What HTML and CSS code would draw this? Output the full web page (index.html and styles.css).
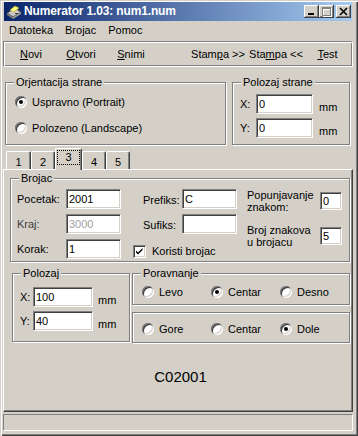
FILE: index.html
```html
<!DOCTYPE html>
<html lang="sr">
<head>
    <meta charset="UTF-8">
    <meta name="viewport" content="width=device-width, initial-scale=1.0">
    <title>Numerator 1.03: num1.num</title>

    <link rel="stylesheet" href="styles.css">
</head>

<body>

    <div class="window">

        <div class="titlebar">
            <svg class="app-icon" viewBox="0 0 16 16">
                <polygon points="1,9 9,4 15,8 7,13" fill="#c8c8c8" stroke="#404040" stroke-width="1"/>
                <polygon points="1,9 7,13 7,15 1,11" fill="#808080"/>
                <polygon points="7,13 15,8 15,10 7,15" fill="#a0a0a0"/>
                <polygon points="4,6 9,2 13,4 8,8" fill="#ffff80" stroke="#b0a020" stroke-width="0.6"/>
                <rect x="9" y="9" width="3" height="1" fill="#404040"/>
            </svg>
            <span class="title">Numerator 1.03: num1.num</span>
            <div class="caption-buttons">
                <span class="cap-btn">
                    <svg viewBox="0 0 15 13" width="15" height="13"><rect x="4" y="8" width="6" height="2" fill="#000"/></svg>
                </span>
                <span class="cap-btn">
                    <svg viewBox="0 0 15 13" width="15" height="13">
                        <path d="M4 3h9v9H4z M5 5v6h7V5z" fill="#fff" fill-rule="evenodd"/>
                        <path d="M3 2h9v9H3z M4 4v6h7V4z" fill="#808080" fill-rule="evenodd"/>
                    </svg>
                </span>
                <span class="cap-btn cap-close">
                    <svg viewBox="0 0 15 13" width="15" height="13"><path d="M4 3l7 7M11 3l-7 7" stroke="#000" stroke-width="1.6"/></svg>
                </span>
            </div>
        </div>

        <div class="menubar">
            <span class="menu__item">Datoteka</span>
            <span class="menu__item">Brojac</span>
            <span class="menu__item">Pomoc</span>
        </div>

        <div class="toolbar">
            <button type="button" class="tool"><u>N</u>ovi</button>
            <button type="button" class="tool"><u>O</u>tvori</button>
            <button type="button" class="tool"><u>S</u>nimi</button>
            <button type="button" class="tool tool--wide tool--print">Stam<u>p</u>a &gt;&gt;</button>
            <button type="button" class="tool tool--wide">Sta<u>m</u>pa &lt;&lt;</button>
            <button type="button" class="tool tool--test"><u>T</u>est</button>
        </div>

        <div class="page-row">
            <fieldset class="group group--orient">
                <legend>Orjentacija strane</legend>
                <div class="radio-col">
                    <label class="radio-item"><span class="radio radio--on"></span>Uspravno (Portrait)</label>
                    <label class="radio-item"><span class="radio"></span>Polozeno (Landscape)</label>
                </div>
            </fieldset>

            <fieldset class="group group--page-pos">
                <legend>Polozaj strane</legend>
                <div class="xy">
                    <div class="xy__row">
                        <span class="xy__label xy__label--page">X:</span>
                        <input type="text" class="edit edit--page" value="0">
                        <span class="unit">mm</span>
                    </div>
                    <div class="xy__row">
                        <span class="xy__label xy__label--page">Y:</span>
                        <input type="text" class="edit edit--page" value="0">
                        <span class="unit">mm</span>
                    </div>
                </div>
            </fieldset>
        </div>

        <div class="tabs">
            <span class="tab">1</span>
            <span class="tab">2</span>
            <span class="tab tab--active"><span class="tab__focus">3</span></span>
            <span class="tab">4</span>
            <span class="tab">5</span>
        </div>

        <div class="tabpanel">
            <fieldset class="group group--counter">
                <legend>Brojac</legend>
                <div class="counter">
                    <div class="counter__col counter__col--a">
                        <div class="field">
                            <span class="field__label field__label--a">Pocetak:</span>
                            <input type="text" class="edit edit--num" value="2001">
                        </div>
                        <div class="field">
                            <span class="field__label field__label--a field__label--dim">Kraj:</span>
                            <input type="text" class="edit edit--num edit--disabled" value="3000" disabled>
                        </div>
                        <div class="field">
                            <span class="field__label field__label--a">Korak:</span>
                            <input type="text" class="edit edit--num" value="1">
                        </div>
                    </div>

                    <div class="counter__col counter__col--b">
                        <div class="field field--indent">
                            <span class="field__label field__label--b">Prefiks:</span>
                            <input type="text" class="edit edit--num" value="C">
                        </div>
                        <div class="field field--indent">
                            <span class="field__label field__label--b">Sufiks:</span>
                            <input type="text" class="edit edit--num" value="">
                        </div>
                        <label class="check-item">
                            <span class="checkbox">
                                <svg viewBox="0 0 13 13" width="13" height="13"><path d="M3 5.5L5 7.5L9.5 3V5L5 9.5L3 7.5Z" fill="#000"/></svg>
                            </span>
                            Koristi brojac
                        </label>
                    </div>

                    <div class="counter__col counter__col--c">
                        <div class="field field--tall">
                            <span class="field__label field__label--c">Popunjavanje<br>znakom:</span>
                            <input type="text" class="edit edit--small" value="0">
                        </div>
                        <div class="field field--tall">
                            <span class="field__label field__label--c">Broj znakova<br>u brojacu</span>
                            <input type="text" class="edit edit--small" value="5">
                        </div>
                    </div>
                </div>
            </fieldset>

            <div class="bottom-row">
                <fieldset class="group group--pos">
                    <legend>Polozaj</legend>
                    <div class="xy xy--pos">
                        <div class="xy__row">
                            <span class="xy__label xy__label--pos">X:</span>
                            <input type="text" class="edit edit--pos" value="100">
                            <span class="unit unit--pos">mm</span>
                        </div>
                        <div class="xy__row">
                            <span class="xy__label xy__label--pos">Y:</span>
                            <input type="text" class="edit edit--pos" value="40">
                            <span class="unit unit--pos">mm</span>
                        </div>
                    </div>
                </fieldset>

                <div class="align-col">
                    <fieldset class="group group--align">
                        <legend>Poravnanje</legend>
                        <div class="radio-row radio-row--h">
                            <label class="radio-item radio-item--fixed"><span class="radio"></span>Levo</label>
                            <label class="radio-item radio-item--fixed"><span class="radio radio--on"></span>Centar</label>
                            <label class="radio-item radio-item--fixed"><span class="radio"></span>Desno</label>
                        </div>
                    </fieldset>
                    <div class="group group--valign">
                        <div class="radio-row radio-row--v">
                            <label class="radio-item radio-item--fixed"><span class="radio"></span>Gore</label>
                            <label class="radio-item radio-item--fixed"><span class="radio"></span>Centar</label>
                            <label class="radio-item radio-item--fixed"><span class="radio radio--on"></span>Dole</label>
                        </div>
                    </div>
                </div>
            </div>

            <div class="preview">C02001</div>
        </div>

        <div class="statusbar"></div>
    </div>

</body>
</html>
```

FILE: styles.css
```css
* {
    box-sizing: border-box;
}

body {
    margin: 0;
    background-color: #d4d0c8;
    font: 11px/13px "Liberation Sans", Arial, sans-serif;
    color: #000;
}

.window {
    width: 358px;
    height: 436px;
    padding: 2px 5px 5px 3px;
    background-color: #d4d0c8;
    box-shadow: inset 1px 1px #d4d0c8, inset 2px 2px #fff, inset -1px -1px #404040, inset -2px -2px #808080;
}

/* title bar */

.titlebar {
    display: flex;
    align-items: center;
    height: 19px;
    margin: 0 1px;
    padding: 0 1px 0 2px;
    background: linear-gradient(to right, #0a246a, #a6caf0);
    color: #fff;
}

.app-icon {
    width: 16px;
    height: 16px;
    margin-right: 2px;
    flex: none;
}

.title {
    font-weight: bold;
    font-size: 12px;
    letter-spacing: -0.15px;
    white-space: nowrap;
}

.caption-buttons {
    display: flex;
    margin-left: auto;
}

.cap-btn {
    display: flex;
    width: 15px;
    height: 13px;
    background-color: #d4d0c8;
    box-shadow: inset -1px -1px #404040, inset 1px 1px #fff, inset -2px -2px #808080;
}

.cap-close {
    margin-left: 2px;
}

/* menu + toolbar */

.menubar {
    display: flex;
    align-items: center;
    height: 19px;
}

.menu__item {
    padding: 0 6px;
}

.toolbar {
    display: flex;
    align-items: center;
    height: 26px;
    margin-top: 1px;
    padding-left: 2px;
    border: 1px solid;
    border-color: #808080 #fff #fff #808080;
    box-shadow: inset 1px 1px #fff, inset -1px -1px #808080;
}

.tool {
    width: 50px;
    height: 20px;
    padding: 0;
    border: none;
    background: none;
    font: inherit;
    color: #000;
    text-align: center;
}

.tool--wide {
    width: 58px;
}

.tool--print {
    margin-left: 33px;
}

.tool--test {
    width: 45px;
}

/* group boxes */

.group {
    margin: 0;
    padding: 0;
    min-width: 0;
    border: 1px solid #808080;
    box-shadow: inset 1px 1px #fff, 1px 1px #fff;
}

.group legend {
    height: 13px;
    margin-left: 8px;
    padding: 0 2px;
    line-height: 13px;
    background-color: #d4d0c8;
}

.page-row {
    display: flex;
    height: 69px;
    margin-top: 9px;
}

.group--orient {
    width: 221px;
    height: 69px;
    margin-left: 2px;
}

.group--page-pos {
    width: 118px;
    height: 69px;
    margin-left: 6px;
}

/* radios */

.radio-col {
    display: flex;
    flex-direction: column;
    gap: 12px;
    padding: 6px 0 0 9px;
}

.radio-item {
    display: flex;
    align-items: center;
    height: 14px;
    white-space: nowrap;
}

.radio-item--fixed {
    width: 69px;
}

.radio {
    position: relative;
    width: 12px;
    height: 12px;
    margin-right: 5px;
    flex: none;
    border-radius: 50%;
    background-color: #fff;
    box-shadow: inset 1px 1px #808080, inset -1px -1px #fff, inset 2px 2px #404040, inset -2px -2px #d4d0c8;
}

.radio--on::after {
    content: "";
    position: absolute;
    left: 4px;
    top: 4px;
    width: 4px;
    height: 4px;
    border-radius: 50%;
    background-color: #000;
}

.radio-row {
    display: flex;
    padding-left: 9px;
}

.radio-row--h {
    padding-top: 5px;
}

.radio-row--v {
    padding-top: 9px;
}

/* edits */

.edit {
    height: 20px;
    margin: 0;
    padding: 0 0 0 2px;
    border: 1px solid;
    border-color: #808080 #fff #fff #808080;
    box-shadow: inset 1px 1px #404040, inset -1px -1px #d4d0c8;
    background-color: #fff;
    font: 11px "Liberation Sans", Arial, sans-serif;
    color: #000;
    outline: none;
}

.edit--disabled {
    color: #a0a0a0;
    -webkit-text-fill-color: #a0a0a0;
}

.edit--page {
    width: 57px;
}

.edit--num {
    width: 55px;
}

.edit--small {
    width: 22px;
    height: 18px;
}

.edit--pos {
    width: 60px;
}

.xy {
    display: flex;
    flex-direction: column;
    gap: 4px;
    padding: 5px 0 0 7px;
}

.xy--pos {
    padding-top: 7px;
}

.xy__row {
    display: flex;
    align-items: center;
    height: 20px;
}

.xy__label--page {
    width: 16px;
}

.xy__label--pos {
    width: 13px;
}

.unit {
    align-self: flex-end;
    margin-left: 6px;
}

.unit--pos {
    margin-left: 5px;
}

/* tabs */

.tabs {
    display: flex;
    align-items: flex-end;
    height: 21px;
    margin-top: 3px;
    padding-left: 3px;
}

.tab {
    width: 24px;
    height: 18px;
    padding-top: 4px;
    text-align: center;
    border-top: 1px solid #fff;
    border-left: 1px solid #fff;
    border-right: 1px solid #404040;
    border-radius: 2px 2px 0 0;
    box-shadow: inset -1px 0 #808080;
}

.tab:first-child {
    width: 25px;
}

.tab--active {
    position: relative;
    z-index: 1;
    width: 27px;
    height: 22px;
    margin-bottom: -1px;
    padding: 1px 1px 0 1px;
    background-color: #d4d0c8;
}

.tab__focus {
    display: block;
    width: 23px;
    height: 15px;
    line-height: 13px;
    border: 1px dotted #000;
}

.tabpanel {
    height: 243px;
    border: 1px solid;
    border-color: #fff #404040 #404040 #fff;
    box-shadow: inset -1px -1px #808080;
}

/* counter group */

.group--counter {
    width: 340px;
    height: 90px;
    margin: 2px 0 0 6px;
}

.counter {
    display: flex;
    padding: 4px 0 0 6px;
}

.counter__col {
    display: flex;
    flex-direction: column;
    gap: 5px;
}

.counter__col--b {
    margin-left: 12px;
}

.counter__col--c {
    gap: 11px;
    margin-left: 10px;
}

.field {
    display: flex;
    align-items: center;
    height: 20px;
}

.field--indent {
    margin-left: 10px;
}

.field--tall {
    height: 24px;
    line-height: 12px;
}

.field__label--a {
    width: 49px;
}

.field__label--dim {
    color: #404040;
}

.field__label--b {
    width: 39px;
    padding-top: 3px;
}

.field__label--c {
    width: 73px;
}

.check-item {
    display: flex;
    align-items: center;
    height: 20px;
    margin-top: 2px;
    white-space: nowrap;
}

.checkbox {
    display: flex;
    width: 13px;
    height: 13px;
    margin-right: 6px;
    background-color: #fff;
    box-shadow: inset 1px 1px #808080, inset -1px -1px #fff, inset 2px 2px #404040, inset -2px -2px #d4d0c8;
}

/* position + alignment */

.bottom-row {
    display: flex;
    margin-top: 5px;
}

.group--pos {
    width: 118px;
    height: 75px;
    margin-left: 8px;
}

.align-col {
    display: flex;
    flex-direction: column;
    margin-left: 2px;
}

.group--align {
    width: 218px;
    height: 38px;
}

.group--valign {
    width: 218px;
    height: 31px;
    margin-top: 7px;
}

.preview {
    margin-top: 25px;
    padding-left: 5px;
    font-size: 15px;
    line-height: 17px;
    text-align: center;
}

.statusbar {
    height: 17px;
    margin-top: 2px;
    border: 1px solid;
    border-color: #808080 #fff #fff #808080;
}
```
